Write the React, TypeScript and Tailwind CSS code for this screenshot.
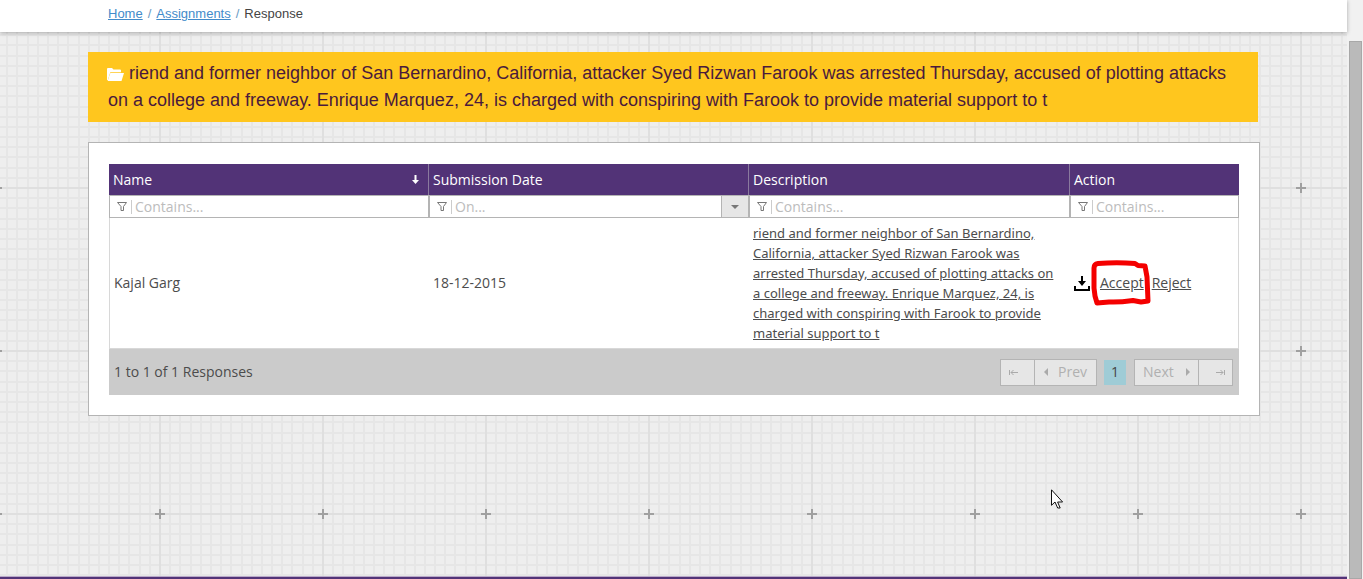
import type { ReactNode } from "react";

const DESCRIPTION =
  "riend and former neighbor of San Bernardino, California, attacker Syed Rizwan Farook was arrested Thursday, accused of plotting attacks on a college and freeway. Enrique Marquez, 24, is charged with conspiring with Farook to provide material support to t";

const MINOR = [10, 20, 31, 41, 51, 61, 71, 82, 92, 102, 112, 122, 132, 143, 153];

function GridBackground() {
  return (
    <svg className="absolute inset-0 h-full w-full" aria-hidden="true">
      <defs>
        <pattern id="paper" x="78" y="74" width="163" height="163" patternUnits="userSpaceOnUse">
          <rect width="163" height="163" fill="#eeeeee" />
          {MINOR.map((n) => (
            <g key={n} fill="#e6e6e6">
              <rect x={(n + 81) % 163} y="0" width="2" height="163" />
              <rect x="0" y={(n + 81) % 163} width="163" height="2" />
            </g>
          ))}
          <rect x="81" y="0" width="2" height="163" fill="#dfdfdf" />
          <rect x="0" y="81" width="163" height="2" fill="#dfdfdf" />
          <rect x="81" y="77" width="2" height="10" fill="#a0a0a0" />
          <rect x="77" y="81" width="10" height="2" fill="#a0a0a0" />
        </pattern>
      </defs>
      <rect width="100%" height="100%" fill="url(#paper)" />
    </svg>
  );
}

function Funnel() {
  return (
    <svg className="h-[11px] w-[10px] shrink-0" viewBox="0 0 10 11" fill="none" stroke="#777" aria-hidden="true">
      <path d="M.5 1.5h9L6.5 5.500V9.500h-2.500V5.500z" />
    </svg>
  );
}

function Filter({ label, hint, children }: { label: string; hint: string; children?: ReactNode }) {
  return (
    <div className="flex h-[23px] items-stretch border border-[#b4b4b4] bg-white">
      <div className="flex min-w-0 flex-1 items-center pl-[7px]">
        <Funnel />
        <span className="mr-[3px] ml-1 h-[14px] w-px shrink-0 bg-[#ccc]" />
        <input
          type="text"
          aria-label={label}
          placeholder={hint}
          className="h-[21px] w-full min-w-0 bg-transparent text-sm leading-5 outline-none placeholder:text-[#bcbcbc]"
        />
      </div>
      {children}
    </div>
  );
}

function Th({ children, width }: { children: ReactNode; width: string }) {
  return (
    <th className={`${width} h-[31px] border-r border-[#8a7a9e] bg-[#523377] px-1 py-0 text-left font-normal text-white last:border-[#523377]`}>
      {children}
    </th>
  );
}

const cell = "border-b border-[#d8d8d8] py-[5px] pl-1 first:border-l last:border-r";
const pageButton = "flex h-[27px] items-center border border-[#b4b4b4] bg-[#e6e6e6] text-[#b0b0b0]";

export default function App() {
  return (
    <div className="flex h-screen overflow-hidden bg-[#f1f1f1] font-['Liberation_Sans',sans-serif]">
      <div className="flex min-w-0 flex-1 flex-col">
        <nav aria-label="Breadcrumb" className="relative z-10 h-8 shrink-0 bg-white pl-[108px] shadow-[0_1px_4px_rgba(0,0,0,0.3)]">
          <ol className="flex gap-[5px] pt-1 text-[13px] leading-5 text-[#444]">
            <li><a href="#home" className="text-[#428bca] underline">Home</a></li>
            <li className="text-[#6a9bc3]">/</li>
            <li><a href="#assignments" className="text-[#428bca] underline">Assignments</a></li>
            <li className="text-[#6a9bc3]">/</li>
            <li aria-current="page">Response</li>
          </ol>
        </nav>

        <div className="relative flex min-h-0 flex-1 flex-col">
          <GridBackground />
          <main className="relative mr-[87px] ml-[88px] flex-1 pt-5">
            <h1 className="mr-[2px] bg-[#ffc61e] px-5 py-2 text-lg leading-[27px] text-[#4a1a3c]">
              <svg className="-ml-px inline-block h-[13px] w-[17px] align-[-2px]" viewBox="0 0 17 13" fill="#fff" aria-hidden="true">
                <path d="M0 12V1q0-1 1-1h4l1.500 1.500H13q1 0 1 1V4.200H3.300L.8 12z" />
                <path d="M3.300 4.900H17L14.500 13H.6z" />
              </svg>{" "}
              {DESCRIPTION}
            </h1>

            <section className="mt-5 border border-[#b4b4b4] bg-white px-5 pt-[21px] pb-5 font-['Open_Sans','Noto_Sans',sans-serif] text-sm leading-5 text-[#4c4c4c]">
              <table className="w-full table-fixed border-separate border-spacing-0">
                <thead>
                  <tr>
                    <Th width="w-[320px]">
                      <span className="flex items-center justify-between pr-1">
                        Name
                        <svg className="h-[9px] w-[9px]" viewBox="0 0 9 9" fill="#fff" aria-hidden="true">
                          <path d="M3.500 0h2v5H8L4.500 9 1 5h2.500z" />
                        </svg>
                      </span>
                    </Th>
                    <Th width="w-[320px]">Submission Date</Th>
                    <Th width="w-[321px]">Description</Th>
                    <Th width="w-auto">Action</Th>
                  </tr>
                  <tr>
                    <td className="p-0"><Filter label="Filter by name" hint="Contains..." /></td>
                    <td className="p-0">
                      <Filter label="Filter by submission date" hint="On...">
                        <button type="button" aria-label="Choose date" className="flex w-[27px] items-center justify-center border-l border-[#b4b4b4] bg-[#e6e6e6]">
                          <svg className="h-1 w-2" viewBox="0 0 8 4" fill="#777" aria-hidden="true"><path d="M0 0h8L4 4z" /></svg>
                        </button>
                      </Filter>
                    </td>
                    <td className="p-0"><Filter label="Filter by description" hint="Contains..." /></td>
                    <td className="p-0"><Filter label="Filter by action" hint="Contains..." /></td>
                  </tr>
                </thead>
                <tbody>
                  <tr>
                    <td className={cell}>Kajal Garg</td>
                    <td className={cell}>18-12-2015</td>
                    <td className={`${cell} pr-3 font-['Noto_Sans',sans-serif] text-[13px]`}><a href="#response" className="underline">{DESCRIPTION}</a></td>
                    <td className={cell}>
                      <div className="flex items-center">
                        <a href="#download" aria-label="Download" className="mr-[10px]">
                          <svg className="h-[15px] w-4" viewBox="0 0 16 15" fill="#000" aria-hidden="true">
                            <path d="M7 0h2v5h3L8 10 4 5h3zM0 10h2v3h12v-3h2v5H0z" />
                          </svg>
                        </a>
                        <span className="relative mr-2">
                          <a href="#accept" className="underline">Accept</a>
                          <svg className="pointer-events-none absolute -top-[13px] -left-[9px] h-[48px] w-[60px]" viewBox="0 0 60 48" fill="none" stroke="#f40000" strokeWidth="5" strokeLinejoin="round" strokeLinecap="round" aria-hidden="true">
                            <path d="M3 28V8q0-4 4-4.500Q26 2 44 3.500l3 2 7 .5 2 11 1 24-7 1-8-1.500q-14 2-24 1.500L6 43 4 36z" />
                          </svg>
                        </span>
                        <a href="#reject" className="underline">Reject</a>
                      </div>
                    </td>
                  </tr>
                </tbody>
              </table>

              <footer className="flex h-[46px] items-center bg-[#cbcbcb] pr-[6px] pl-[5px]">
                <p className="flex-1">1 to 1 of 1 Responses</p>
                <div className="flex items-center">
                  <button type="button" disabled aria-label="First page" className={`${pageButton} w-[35px] pl-2`}>
                    <svg className="h-[7px] w-[9px]" viewBox="0 0 9 7" fill="none" stroke="#aaa" aria-hidden="true"><path d="M.5 1v5M2 3.500h7M4.500 1 2 3.500 4.500 6" /></svg>
                  </button>
                  <button type="button" disabled className={`${pageButton} -ml-px w-[63px] justify-between px-[9px]`}>
                    <svg className="h-2 w-1" viewBox="0 0 4 8" fill="#aaa" aria-hidden="true"><path d="M4 0v8L0 4z" /></svg>
                    Prev
                  </button>
                  <button type="button" aria-current="page" className="mr-2 ml-[7px] h-[25px] w-[22px] bg-[#9fccd6] text-[#444]">1</button>
                  <button type="button" disabled className={`${pageButton} w-[65px] justify-between px-2`}>
                    Next
                    <svg className="h-2 w-1" viewBox="0 0 4 8" fill="#aaa" aria-hidden="true"><path d="M0 0v8l4-4z" /></svg>
                  </button>
                  <button type="button" disabled aria-label="Last page" className={`${pageButton} -ml-px w-[35px] justify-end pr-[7px]`}>
                    <svg className="h-[7px] w-[9px]" viewBox="0 0 9 7" fill="none" stroke="#aaa" aria-hidden="true"><path d="M8.500 1v5M7 3.500H0M4.500 1 7 3.500 4.500 6" /></svg>
                  </button>
                </div>
              </footer>
            </section>
          </main>
          <div className="relative h-[3px] shrink-0 border-t border-[#b9aac9] bg-[#523377]" />
          <svg className="pointer-events-none absolute top-[457px] left-[1051px] h-[20px] w-[13px]" viewBox="0 0 13 20" fill="#fff" stroke="#111" aria-hidden="true">
            <path d="M.5.800v15.500l3.500-3.300 2.700 6h2.500l-2.600-6h5z" />
          </svg>
        </div>
      </div>
      <div className="w-4 shrink-0 pt-[41px] pr-px pl-[2px]">
        <div className="h-full border border-[#a8a8a8] bg-[#bababa]" />
      </div>
    </div>
  );
}
